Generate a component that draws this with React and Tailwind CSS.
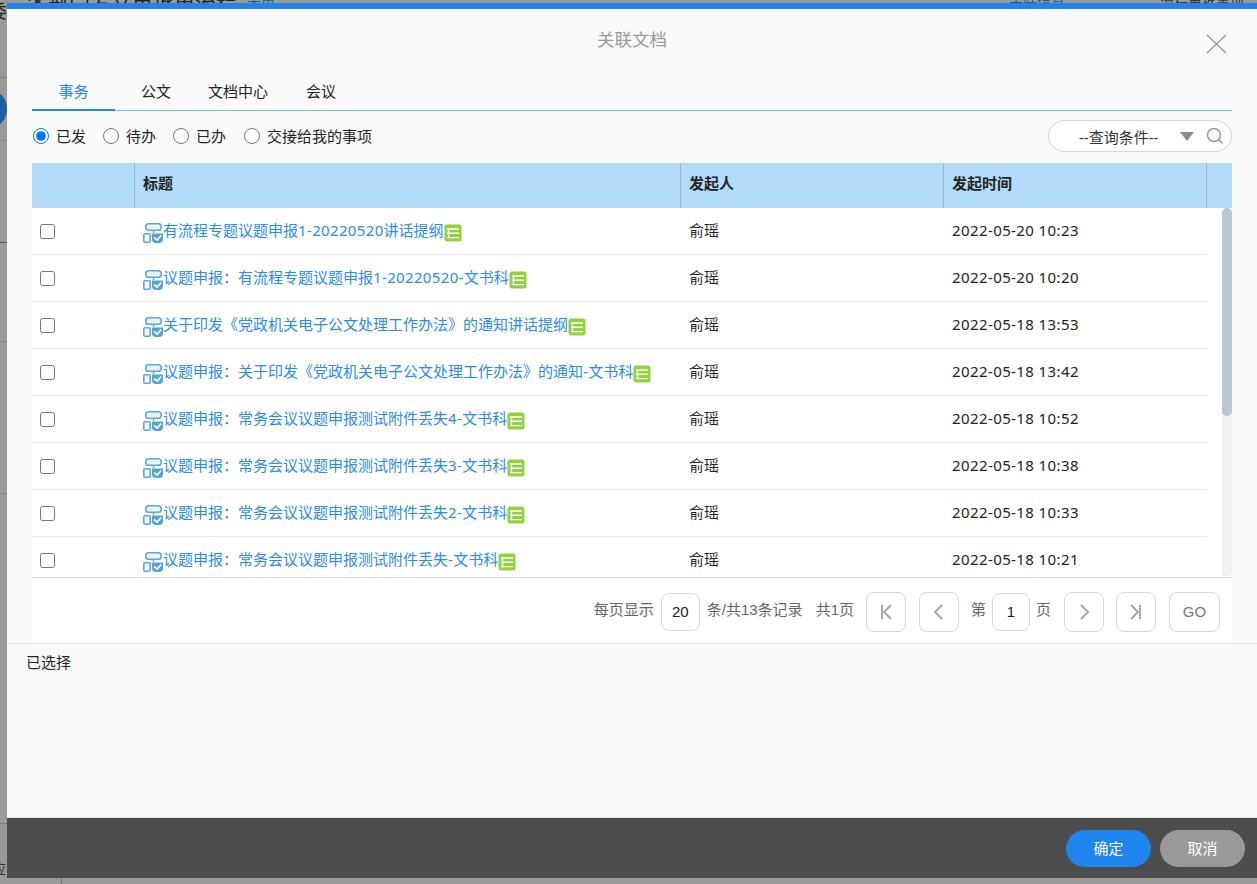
import React from "react";

const F = { fontFamily: '"Noto Sans","Noto Sans CJK SC",sans-serif' };
const P = { fontFamily: '"Liberation Sans","Noto Sans CJK SC",sans-serif' };

const rows = [
  ["有流程专题议题申报1-20220520讲话提纲", "2022-05-20 10:23"],
  ["议题申报：有流程专题议题申报1-20220520-文书科", "2022-05-20 10:20"],
  ["关于印发《党政机关电子公文处理工作办法》的通知讲话提纲", "2022-05-18 13:53"],
  ["议题申报：关于印发《党政机关电子公文处理工作办法》的通知-文书科", "2022-05-18 13:42"],
  ["议题申报：常务会议议题申报测试附件丢失4-文书科", "2022-05-18 10:52"],
  ["议题申报：常务会议议题申报测试附件丢失3-文书科", "2022-05-18 10:38"],
  ["议题申报：常务会议议题申报测试附件丢失2-文书科", "2022-05-18 10:33"],
  ["议题申报：常务会议议题申报测试附件丢失-文书科", "2022-05-18 10:21"],
];

function Title({ text }) {
  const parts = text.split(/([-0-9]+)/);
  return (
    <span className="pb-[1px]">
      {parts.map((p, i) =>
        i % 2 === 1 ? (
          <span key={i} className="tracking-[0.35px]">{p}</span>
        ) : (
          <span key={i}>{p}</span>
        )
      )}
    </span>
  );
}

function FlowIcon() {
  return (
    <svg width="20" height="21" viewBox="0 0 20 21" className="shrink-0 mt-[3px]">
      <rect x="2.8" y="1.8" width="15.4" height="6.4" rx="2.8" fill="#e6f3fa" stroke="#62a9cf" strokeWidth="1.6" />
      <path d="M10.5 8v3" stroke="#62a9cf" strokeWidth="1.4" />
      <rect x="0.8" y="11.8" width="6.4" height="8.4" rx="1.2" fill="#eef7fb" stroke="#62a9cf" strokeWidth="1.6" />
      <path d="M9 11.5h11v5.5a4 4 0 0 1-4 4h-3a4 4 0 0 1-4-4z" fill="#55a3cf" />
      <path d="M11 15.5l3.2 2.6 4-4.6" fill="none" stroke="#fff" strokeWidth="1.7" />
    </svg>
  );
}

function ListIcon() {
  return (
    <svg width="18" height="18" viewBox="0 0 18 18" className="shrink-0 mt-[3px]">
      <rect x="0.5" y="0.5" width="17" height="17" rx="2.5" fill="#93d13f" />
      <path d="M4.5 5v9M3 5h12M3 9.3h12M3 13.6h12" stroke="#fff" strokeWidth="1.4" fill="none" />
    </svg>
  );
}

function PageBtn({ d, className = "" }) {
  return (
    <button className={"w-10 h-10 rounded-lg border border-[#d9d9d9] bg-white flex items-center justify-center " + className}>
      <svg width="16" height="18" viewBox="0 0 16 18" fill="none" stroke="#a8a8a8" strokeWidth="2">
        <path d={d} />
      </svg>
    </button>
  );
}

function Radio({ label, checked, className = "" }) {
  return (
    <label className={"flex items-center " + className}>
      <input type="radio" name="kind" defaultChecked={checked} className="w-4 h-4 m-0 accent-[#0075ff]" />
      <span className="ml-[7px] text-[15px] text-[#222]">{label}</span>
    </label>
  );
}

export default function App() {
  return (
    <div className="relative w-[1257px] h-[884px] overflow-hidden bg-[#9a9a9a]" style={F}>
      {/* page dimmed behind the dialog */}
      <div className="absolute left-[27px] top-[-12px] text-[21px] text-[#222] whitespace-nowrap">各部门发文审批单流程</div>
      <div className="absolute left-[-11px] top-[-2px] text-[18px] text-[#222]">委</div>
      <div className="absolute left-[247px] top-[-9px] text-[14px] text-[#1c5a9e]">表单</div>
      <div className="absolute left-[1009px] top-[-9px] text-[14px] text-[#1c5a9e]">关联信息</div>
      <div className="absolute left-[1160px] top-[-9px] text-[14px] text-[#333] whitespace-nowrap">流程审批事项</div>
      <div className="absolute left-[-8px] top-[858px] text-[14px] text-[#333]">应</div>
      <div className="absolute left-[-33px] top-[89px] w-[40px] h-[40px] rounded-full bg-[#1a5fa8]" />
      <div className="absolute left-0 top-[77px] w-[7px] h-px bg-[#6f7f92]" />
      <div className="absolute left-0 top-[140px] w-[7px] h-px bg-[#8a8a8a]" />
      <div className="absolute left-0 top-[242px] w-[7px] h-px bg-[#1a5fa8]" />
      <div className="absolute left-0 top-[341px] w-[7px] h-px bg-[#8a8a8a]" />
      <div className="absolute left-0 top-[493px] w-[7px] h-px bg-[#8a8a8a]" />
      <div className="absolute left-0 top-[823px] w-[7px] h-px bg-[#777]" />
      <div className="absolute left-[61px] top-[878px] w-px h-[6px] bg-[#777]" />

      <div className="absolute left-[7px] top-[3px] w-[1250px] h-[875px] flex flex-col bg-[#fafafa] border-t-[6px] border-[#1e84ee]">
        {/* title */}
        <div className="relative h-[59px] shrink-0 flex items-center justify-center pt-[2px]">
          <span className="text-[17.5px] text-[#999]">关联文档</span>
          <svg width="22" height="20" viewBox="0 0 22 20" className="absolute left-[1199px] top-[25px]" fill="none" stroke="#999" strokeWidth="1.3">
            <path d="M1 1l19 18M20 1L1 19" />
          </svg>
        </div>

        {/* tabs */}
        <div className="mx-[25px] w-[1200px] h-[43px] shrink-0 flex items-stretch border-b border-[#6fbcf7] text-[15px] text-[#222]">
          <div className="w-[83px] flex items-center justify-center text-[#1e84ee] border-b-[2px] border-[#1e84ee] -mb-px pt-[5px]">事务</div>
          <div className="w-[82px] flex items-center justify-center pt-[5px]">公文</div>
          <div className="w-[82px] flex items-center justify-center pt-[5px]">文档中心</div>
          <div className="w-[84px] flex items-center justify-center pt-[5px]">会议</div>
        </div>

        {/* filters */}
        <div className="mx-[25px] w-[1200px] h-[52px] shrink-0 flex items-center justify-between pb-[2px]">
          <div className="flex items-center pl-px">
            <Radio label="已发" checked />
            <Radio label="待办" className="ml-[17px]" />
            <Radio label="已办" className="ml-[17px]" />
            <Radio label="交接给我的事项" className="ml-[18px]" />
          </div>
          <div className="w-[184px] h-[32px] rounded-full border border-[#d5d5d5] bg-white flex items-center relative">
            <span className="ml-[30px] pt-[2px] text-[15px] text-[#333]">--查询条件--</span>
            <span className="ml-[22px] w-0 h-0 border-x-[7px] border-x-transparent border-t-[9px] border-t-[#8c8c8c]" />
            <svg width="18" height="18" viewBox="0 0 18 18" className="ml-[12px]" fill="none" stroke="#9a9a9a" strokeWidth="1.5">
              <circle cx="8" cy="8" r="6.5" />
              <path d="M12.8 12.8L16.5 16.5" />
            </svg>
          </div>
        </div>

        {/* table */}
        <div className="mx-[25px] w-[1200px] h-[480px] shrink-0 bg-white flex flex-col">
          <div className="h-[45px] shrink-0 bg-[#b3dcf9] flex text-[15px] font-bold text-[#222]">
            <div className="w-[103px] border-r border-[#a3b4d2]" />
            <div className="w-[546px] border-r border-[#a3b4d2] pl-2 pb-[4px] flex items-center">标题</div>
            <div className="w-[263px] border-r border-[#a3b4d2] pl-2 pb-[4px] flex items-center">发起人</div>
            <div className="w-[263px] border-r border-[#a3b4d2] pl-2 pb-[4px] flex items-center">发起时间</div>
          </div>

          <div className="h-[370px] shrink-0 flex overflow-hidden border-b border-[#dcdcdc]">
            <div className="w-[1175px] shrink-0">
              {rows.map(([title, time]) => (
                <div key={time} className="h-[47px] flex items-center border-b border-[#eaeaea] text-[15px]">
                  <div className="w-[103px] pl-2 flex items-center">
                    <input type="checkbox" className="w-[15px] h-[15px] m-0" />
                  </div>
                  <div className="w-[546px] pl-[8px] flex items-center text-[#2a8cee] whitespace-nowrap">
                    <FlowIcon />
                    <Title text={title} />
                    <ListIcon />
                  </div>
                  <div className="w-[263px] pl-[8px] text-[#222] pb-[2px]">俞瑶</div>
                  <div className="pl-[8px] text-[#222] tracking-[0.4px] pb-[2px]">{time}</div>
                </div>
              ))}
            </div>
            <div className="ml-[15px] w-[10px] h-full bg-[#f1f1f3] rounded-full">
              <div className="w-[10px] h-[208px] bg-[#bcc7d4] rounded-full" />
            </div>
          </div>

          {/* pager */}
          <div className="h-[65px] flex items-center justify-end pr-3 pt-[3px] text-[#666] text-[15px] whitespace-nowrap" style={P}>
            <span className="-mt-[3px]">每页显示</span>
            <div className="ml-[7px] w-[39px] h-[38px] rounded-lg border border-[#d9d9d9] flex items-center justify-center text-[#222]">20</div>
            <span className="ml-[7px] -mt-[3px]">条/共13条记录</span>
            <span className="ml-[13px] -mt-[3px]">共1页</span>
            <PageBtn className="ml-[12px]" d="M4 2v14M13 2L6 9l7 7" />
            <PageBtn className="ml-[13px]" d="M11 2L4 9l7 7" />
            <span className="ml-[12px] -mt-[3px]">第</span>
            <div className="ml-[6px] w-[38px] h-[38px] rounded-lg border border-[#d9d9d9] flex items-center justify-center text-[#222]">1</div>
            <span className="ml-[6px] -mt-[3px]">页</span>
            <PageBtn className="ml-[13px]" d="M5 2l7 7-7 7" />
            <PageBtn className="ml-[12px]" d="M3 2l7 7-7 7M12 2v14" />
            <button className="ml-[13px] w-[51px] h-10 rounded-lg border border-[#d9d9d9] bg-white text-[#777]">GO</button>
          </div>
        </div>

        {/* selected */}
        <div className="flex-1 border-t border-[#e4e4e4] pl-[19px] pt-[7px] text-[15px] text-[#222] leading-[22px]">已选择</div>

        {/* footer */}
        <div className="h-[61px] shrink-0 bg-[#4d4d4d] border-t border-[#e6e6e6] flex items-center justify-end pr-3 pt-[1px] text-[15px] text-white">
          <button className="w-[85px] h-[37px] rounded-full bg-[#1e84ee]">确定</button>
          <button className="ml-[9px] w-[85px] h-[37px] rounded-full bg-[#999]">取消</button>
        </div>
      </div>
    </div>
  );
}
